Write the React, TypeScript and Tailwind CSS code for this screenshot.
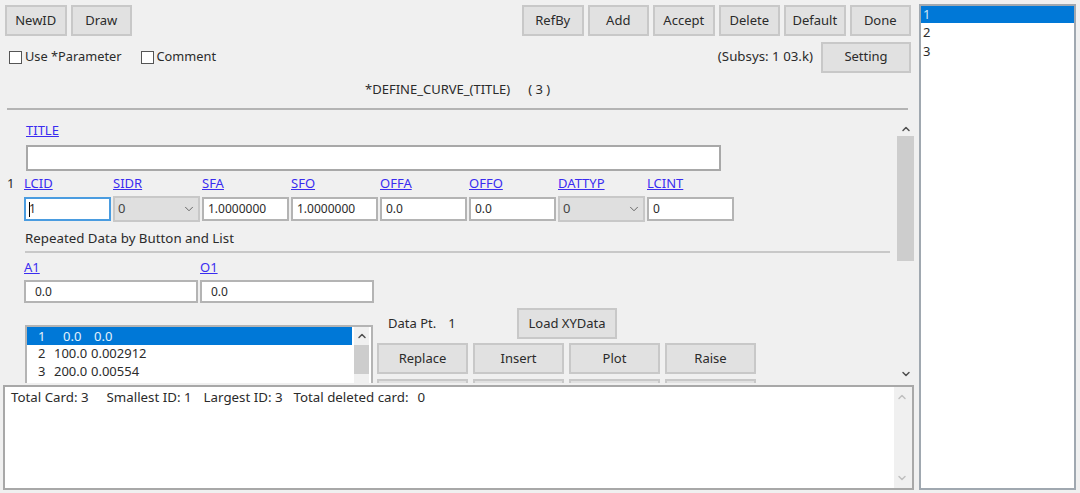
import { ChevronDown, ChevronUp } from "lucide-react";

const font = { fontFamily: '"Noto Sans", "Open Sans", sans-serif' };

const Btn = ({ label, className = "w-[61.5px]" }: { label: string; className?: string }) => (
  <button
    type="button"
    className={`h-[31px] shrink-0 border-2 border-[#c8c8c8] bg-[#e1e1e1] text-[13px] text-[#2b2b2b] ${className}`}
  >
    {label}
  </button>
);

const Check = ({ label }: { label: string }) => (
  <label className="flex items-center gap-[3px] text-[12.8px] text-[#2b2b2b]">
    <span className="size-[13px] border border-[#555] bg-white" />
    {label}
  </label>
);

const Link = ({ label }: { label: string }) => (
  <a className="block h-[18px] text-[13px] leading-[16px] text-[#3a2cf0] underline">{label}</a>
);

const Field = ({ value, className = "h-[24px] pl-[4px]" }: { value: string; className?: string }) => (
  <div className={`flex items-center border-2 border-[#b4b4b4] bg-white text-[12px] text-[#2b2b2b] ${className}`}>
    {value}
  </div>
);

const Select = () => (
  <div className="my-[-1px] flex h-[26px] items-center justify-between border-2 border-[#c8c8c8] bg-[#dfdfdf] pl-[3px] pr-[2px] text-[13px] text-[#444]">
    0
    <ChevronDown size={14} strokeWidth={1.5} className="text-[#555]" />
  </div>
);

export default function App() {
  return (
    <div style={font} className="flex h-[493px] w-[1080px] overflow-hidden bg-[#f0f0f0]">
      <div className="flex w-[914px] shrink-0 flex-col">
        {/* top buttons */}
        <div className="flex h-[36px] items-start gap-[4px] pl-[5px] pr-[3px] pt-[5px]">
          <Btn label="NewID" />
          <Btn label="Draw" />
          <div className="ml-auto flex gap-[4px]">
            <Btn label="RefBy" />
            <Btn label="Add" />
            <Btn label="Accept" />
            <Btn label="Delete" />
            <Btn label="Default" />
            <Btn label="Done" />
          </div>
        </div>

        <div className="mt-[6px] flex h-[30px] items-center pl-[9px] pr-[3px]">
          <Check label="Use *Parameter" />
          <div className="ml-[19px]">
            <Check label="Comment" />
          </div>
          <span className="ml-auto mr-[8px] text-[13.3px] text-[#2b2b2b]">(Subsys: 1 03.k)</span>
          <Btn label="Setting" className="w-[90px]" />
        </div>

        <div className="mt-[8px] h-[18px] pl-[365px] text-[13px] leading-[18px] text-[#2b2b2b]">
          *DEFINE_CURVE_(TITLE)
          <span className="ml-[18px]">( 3 )</span>
        </div>

        <div className="ml-[7px] mr-[6px] mt-[10px] h-[2px] bg-[#b4b4b4]" />

        {/* scrolling form */}
        <div className="mt-[12px] flex h-[261px] shrink-0 overflow-hidden">
          <div className="min-w-0 flex-1 text-[#2b2b2b]">
            <div className="pl-[26px]">
              <Link label="TITLE" />
              <div className="mt-[5px] h-[26px] w-[695px] border-2 border-[#a8a8a8] bg-white" />
            </div>

            <div className="mt-[4px] flex">
              <span className="w-[24px] pl-[7px] text-[13px] leading-[16px]">1</span>
              <div className="grid grid-cols-[repeat(8,87px)] gap-x-[2px]">
                {["LCID", "SIDR", "SFA", "SFO", "OFFA", "OFFO", "DATTYP", "LCINT"].map((name) => (
                  <Link key={name} label={name} />
                ))}
              </div>
            </div>
            <div className="ml-[24px] mt-[4px] grid grid-cols-[repeat(8,87px)] gap-x-[2px]">
              <div className="flex h-[24px] items-center border-2 border-[#4a9ce0] bg-white pl-[3px] text-[12px]">
                <span className="mr-[-1px] h-[15px] w-px bg-black" />1
              </div>
              <Select />
              <Field value="1.0000000" />
              <Field value="1.0000000" />
              <Field value="0.0" />
              <Field value="0.0" />
              <Select />
              <Field value="0" />
            </div>

            <div className="ml-[25px] mt-[8px] h-[18px] text-[13.3px] leading-[18px]">
              Repeated Data by Button and List
            </div>
            <div className="ml-[25px] mr-[7px] mt-[4px] h-[2px] bg-[#c8c8c8]" />

            <div className="ml-[24px] mt-[6px] grid grid-cols-[174px_174px] gap-x-[2px]">
              <Link label="A1" />
              <Link label="O1" />
              <Field value="0.0" className="mt-[3px] h-[23px] pl-[9px]" />
              <Field value="0.0" className="mt-[3px] h-[23px] pl-[9px]" />
            </div>

            <div className="mt-[5px] flex">
              <div className="ml-[25px] mt-[17px] flex h-[120px] w-[348px] shrink-0 border-2 border-[#b4b4b4] bg-white pr-[2px]">
                <div className="min-w-0 flex-1 text-[13px] leading-[16px] text-[#2b2b2b]">
                  <div className="flex h-[18px] bg-[#0078d7] pl-[11px] leading-[18px] text-[#e6f2fb]">
                    <span className="w-[25px]">1</span>
                    <span className="w-[31px]">0.0</span>
                    <span>0.0</span>
                  </div>
                  <div className="flex h-[18px] pl-[11px]">
                    <span className="w-[16px]">2</span>
                    <span className="w-[37px]">100.0</span>
                    <span>0.002912</span>
                  </div>
                  <div className="flex h-[18px] pl-[11px]">
                    <span className="w-[16px]">3</span>
                    <span className="w-[37px]">200.0</span>
                    <span>0.00554</span>
                  </div>
                </div>
                <div className="ml-[2px] flex w-[15px] shrink-0 flex-col items-center bg-[#f0f0f0] text-[#505050]">
                  <div className="flex h-[18px] items-center">
                    <ChevronUp size={12} strokeWidth={3} />
                  </div>
                  <div className="h-[29px] w-full bg-[#cdcdcd]" />
                </div>
              </div>

              <div className="ml-[4px] flex-1">
                <div className="flex h-[31px] items-center text-[13px]">
                  <span className="ml-[11px] w-[129px]">
                    Data Pt.
                    <span className="ml-[12px]">1</span>
                  </span>
                  <Btn label="Load XYData" className="w-[100px]" />
                </div>
                <div className="mt-[4px] flex gap-[5px]">
                  <Btn label="Replace" className="w-[91px]" />
                  <Btn label="Insert" className="w-[91px]" />
                  <Btn label="Plot" className="w-[91px]" />
                  <Btn label="Raise" className="w-[91px]" />
                </div>
                <div className="mt-[5px] flex gap-[5px]">
                  <Btn label="" className="w-[91px]" />
                  <Btn label="" className="w-[91px]" />
                  <Btn label="" className="w-[91px]" />
                  <Btn label="" className="w-[91px]" />
                </div>
              </div>
            </div>
          </div>

          {/* form scrollbar */}
          <div className="flex w-[17px] shrink-0 flex-col items-center text-[#505050]">
            <div className="flex h-[14px] items-center">
              <ChevronUp size={12} strokeWidth={3} />
            </div>
            <div className="h-[125px] w-full bg-[#cdcdcd]" />
            <div className="mt-auto flex h-[18px] items-center">
              <ChevronDown size={12} strokeWidth={3} />
            </div>
          </div>
        </div>

        {/* status box */}
        <div className="ml-[3px] mt-[2px] flex h-[105px] border-2 border-[#a8a8a8] bg-white">
          <div className="flex-1 pl-[6px] pt-[2px] text-[13.3px] leading-[16px] text-[#2b2b2b]">
            <span>Total Card: 3</span>
            <span className="ml-[18px]">Smallest ID: 1</span>
            <span className="ml-[12px]">Largest ID: 3</span>
            <span className="ml-[11px]">Total deleted card:</span>
            <span className="ml-[9px]">0</span>
          </div>
          <div className="flex w-[18px] shrink-0 flex-col items-center justify-between bg-[#f0f0f0] py-[4px] pr-[3px] text-[#c0c0c0]">
            <ChevronUp size={12} strokeWidth={3} />
            <ChevronDown size={12} strokeWidth={3} />
          </div>
        </div>
      </div>

      {/* id list */}
      <div className="ml-[5px] mt-[4px] h-[486px] w-[157px] border-2 border-[#a0a8b0] bg-white text-[13px] leading-[18.5px] text-[#2b2b2b]">
        <div className="h-[17px] bg-[#0078d7] pl-[2px] leading-[17px] text-[#cfe6f8]">1</div>
        <div className="pl-[2px]">2</div>
        <div className="pl-[2px]">3</div>
      </div>
    </div>
  );
}
